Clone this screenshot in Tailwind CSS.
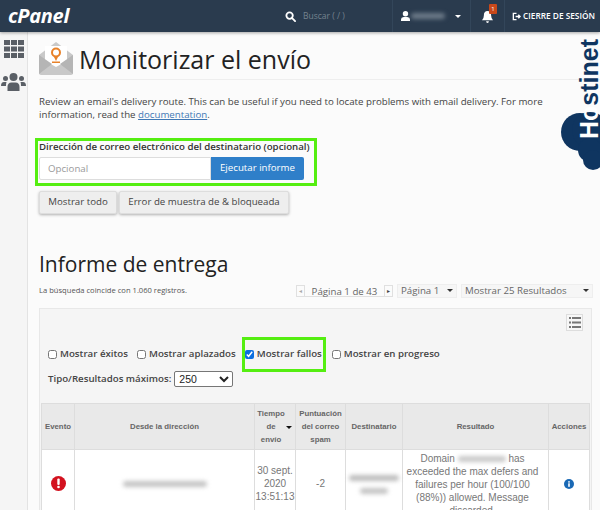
<!DOCTYPE html>
<html lang="es">
<head>
  <meta charset="utf-8"/>
  <title>Monitorizar el envío</title>
  <script src="https://cdn.jsdelivr.net/npm/@tailwindcss/browser@4"></script>
</head>
<body class="w-[600px] h-[510px] overflow-hidden bg-[#fbfbfb] font-['Open_Sans',sans-serif] text-[#333]">
  <!-- Top bar -->
  <header class="h-[32px] bg-[#2a3b4e] flex items-center text-white relative z-10 shadow-[0_1px_3px_rgba(0,0,0,0.35)]">
    <div class="w-[277px] pl-[8px] font-bold italic text-[20px] leading-[28px] tracking-[-0.3px]">cPanel</div>
    <div class="w-[116px] h-full flex items-center border-r border-[#33465a]">
      <svg class="w-[11px] h-[11px] ml-[8px]" viewBox="0 0 12 12" fill="none" stroke="#fff" stroke-width="2"><circle cx="5" cy="5" r="3.500"/><path d="M7.500 7.500 11 11" stroke-linecap="round"/></svg>
      <span class="ml-[7px] text-[8.500px] text-[#75838f]">Buscar ( / )</span>
    </div>
    <div class="w-[78px] h-full flex items-center border-r border-[#33465a]">
      <svg class="w-[9px] h-[10px] ml-[8px]" viewBox="0 0 10 11" fill="#fff"><circle cx="5" cy="3" r="3"/><path d="M0 11V9q0-2 3-2.500h4q3 .5 3 2.500v2z"/></svg>
      <span class="ml-[1px] w-[34px] h-[6px] rounded-full bg-[#6d7b89] blur-[2px]"></span>
      <span class="ml-[10px] w-0 h-0 border-x-[3px] border-x-transparent border-t-[3px] border-t-white"></span>
    </div>
    <div class="w-[34px] h-full flex items-center border-r border-[#33465a] relative">
      <svg class="w-[11px] h-[12px] ml-[11px] mt-[2px]" viewBox="0 0 12 13" fill="#fff"><path d="M6 0q4 0 4 5 0 3 2 5H0q2-2 2-5 0-5 4-5zM4.500 11h3q0 2-1.500 2t-1.500-2z"/></svg>
      <span class="absolute left-[18px] top-[4px] w-[8px] h-[10px] bg-[#c8481a] text-[6px] leading-[10px] text-center rounded-[1px]">1</span>
    </div>
    <div class="flex-1 flex items-center pl-[7px] text-[8.300px] font-semibold whitespace-nowrap">
      <svg class="w-[9px] h-[9px] mr-[2px]" viewBox="0 0 10 10" fill="none" stroke="#fff" stroke-width="1.500"><path d="M5 1.500H1.500v7H5"/><path d="M4 5h5M7 3l2 2-2 2"/></svg>
      CIERRE DE SESIÓN
    </div>
  </header>

  <div class="flex h-[478px]">
    <!-- Sidebar -->
    <aside class="w-[28px] shrink-0 bg-[#f5f5f5] border-r border-[#e3e3e3] flex flex-col items-center pt-[8px] gap-[15px]">
      <svg class="w-[20px] h-[18px]" viewBox="0 0 20 18" fill="#5a5f66">
        <rect x="0" y="0" width="6" height="5"/><rect x="7" y="0" width="6" height="5"/><rect x="14" y="0" width="6" height="5"/>
        <rect x="0" y="6.500" width="6" height="5"/><rect x="7" y="6.500" width="6" height="5"/><rect x="14" y="6.500" width="6" height="5"/>
        <rect x="0" y="13" width="6" height="5"/><rect x="7" y="13" width="6" height="5"/><rect x="14" y="13" width="6" height="5"/>
      </svg>
      <svg class="w-[25px] h-[18px]" viewBox="0 0 25 18" fill="#5a5f66">
        <circle cx="12.500" cy="4" r="4"/><path d="M6.500 18v-4q0-4.500 4-4.500h4q4 0 4 4.500v4z"/>
        <circle cx="4.500" cy="5.500" r="2.500"/><path d="M0 13q0-4 3-4h2.500q-.5 1-.5 4z"/>
        <circle cx="20.500" cy="5.500" r="2.500"/><path d="M25 13q0-4-3-4h-2.500q.5 1 .5 4z"/>
      </svg>
    </aside>

    <main class="flex-1 relative pl-[11px] pr-[7px] overflow-hidden">
      <!-- Title -->
      <div class="flex items-center h-[48px] pt-[6px] border-b border-[#eeeeee] -mr-[7px]">
        <svg class="w-[34px] h-[33px] shrink-0 mr-[6px]" viewBox="0 0 34 33">
          <path d="M0 13 17 0l17 13v18a2 2 0 0 1-2 2H2a2 2 0 0 1-2-2z" fill="#c9c9c9"/>
          <path d="M6 4h22v15l-11 6-11-6z" fill="#fff"/>
          <path d="M0 13l13 9-13 10zM34 13 21 22l13 10z" fill="#b5b5b5"/>
          <circle cx="17" cy="10.500" r="4" fill="none" stroke="#e8822a" stroke-width="2"/>
          <path d="M14.500 14 17 19l2.500-5zM13 19.500h8v1.500h-8z" fill="#e8822a"/>
        </svg>
        <h1 class="text-[25px] leading-[32px] text-[#222] whitespace-nowrap">Monitorizar el envío</h1>
      </div>

      <p class="mt-[15px] text-[9.700px] leading-[13px] text-[#444] w-[510px]">Review an email's delivery route. This can be useful if you need to locate problems with email delivery. For more information, read the <a class="text-[#3f78b5] underline">documentation</a>.</p>

      <!-- Recipient form -->
      <div class="mt-[17px] -ml-[4px] w-[282px] h-[48px] border-[3px] border-[#55ee11] pl-[1px]">
        <label class="block text-[9.700px] leading-[12px] font-semibold text-[#333] whitespace-nowrap">Dirección de correo electrónico del destinatario (opcional)</label>
        <div class="flex mt-[4px] w-[265px] h-[23px]">
          <input class="w-[172px] h-full bg-white border border-[#dddddd] rounded-l-[2px] px-[8px] text-[9.700px] placeholder:text-[#9a9a9a] outline-none" placeholder="Opcional"/>
          <button class="w-[93px] h-full bg-[#2f7fc9] text-white text-[9.700px] rounded-r-[2px]">Ejecutar informe</button>
        </div>
      </div>

      <div class="flex gap-[2px] mt-[5px]">
        <button class="w-[78px] h-[23px] bg-[#eeeeee] border border-[#dddddd] rounded-[2px] shadow-[0_1px_3px_rgba(0,0,0,0.3)] text-[9.700px] text-[#444]">Mostrar todo</button>
        <button class="w-[170px] h-[23px] bg-[#eeeeee] border border-[#dddddd] rounded-[2px] shadow-[0_1px_3px_rgba(0,0,0,0.3)] text-[9.700px] text-[#444]">Error de muestra de &amp; bloqueada</button>
      </div>

      <h2 class="mt-[34px] text-[21px] leading-[32px] text-[#222] whitespace-nowrap">Informe de entrega</h2>

      <!-- Pagination row -->
      <div class="flex items-center justify-between h-[15px] mt-[3px] w-[554px]">
        <span class="text-[7.600px] text-[#555]">La búsqueda coincide con 1.060 registros.</span>
        <div class="flex items-center text-[9.700px] text-[#666]">
          <span class="w-[9px] h-[12px] border border-[#e0e0e0] text-[6px] leading-[10px] text-center text-[#aaa]">◂</span>
          <span class="w-[79px] h-[13px] leading-[15px] text-center border-b border-[#e0e0e0] whitespace-nowrap">Página 1 de 43</span>
          <span class="w-[9px] h-[12px] border border-[#e0e0e0] text-[6px] leading-[10px] text-center text-[#444]">▸</span>
          <span class="ml-[4px] w-[60px] h-[14px] bg-[#f6f6f6] border border-[#eeeeee] pl-[3px] leading-[12px] flex justify-between items-center pr-[3px]">Página 1<i class="w-0 h-0 border-x-[3px] border-x-transparent border-t-[3px] border-t-[#333]"></i></span>
          <span class="ml-[4px] w-[132px] h-[14px] bg-[#f6f6f6] border border-[#eeeeee] pl-[3px] leading-[12px] flex justify-between items-center pr-[3px]">Mostrar 25 Resultados<i class="w-0 h-0 border-x-[3px] border-x-transparent border-t-[3px] border-t-[#333]"></i></span>
        </div>
      </div>

      <!-- Report panel -->
      <section class="mt-[10px] w-[553px] h-[210px] bg-[#f5f5f5] border border-[#e8e8e8] relative pt-[28px]">
        <div class="absolute right-[8px] top-[5px] w-[17px] h-[17px] border border-[#dddddd] bg-[#f7f7f7] flex items-center justify-center">
          <svg class="w-[12px] h-[11px]" viewBox="0 0 12 11" fill="#777"><rect x="0" y="0" width="2" height="2"/><rect x="3" y="0" width="9" height="2"/><rect x="0" y="4.500" width="2" height="2"/><rect x="3" y="4.500" width="9" height="2"/><rect x="0" y="9" width="2" height="2"/><rect x="3" y="9" width="9" height="2"/></svg>
        </div>

        <div class="flex items-center h-[35px] pl-[8px] text-[9.700px] font-semibold text-[#444] whitespace-nowrap">
          <label class="flex items-center gap-[3px]"><input type="checkbox" class="w-[9px] h-[9px] m-0"/>Mostrar éxitos</label>
          <label class="flex items-center gap-[3px] ml-[9px]"><input type="checkbox" class="w-[9px] h-[9px] m-0"/>Mostrar aplazados</label>
          <label class="flex items-center gap-[3px] ml-[6px] h-[35px] w-[84px] border-[3px] border-[#55ee11]"><input type="checkbox" checked class="w-[9px] h-[9px] m-0 accent-[#0b6fe0]"/>Mostrar fallos</label>
          <label class="flex items-center gap-[3px] ml-[6px]"><input type="checkbox" class="w-[9px] h-[9px] m-0"/>Mostrar en progreso</label>
        </div>

        <div class="flex items-center pl-[8px] h-[16px] -mt-[1px] text-[9.700px] font-semibold text-[#444]">
          Tipo/Resultados máximos:
          <select class="ml-[3px] w-[59px] h-[16px] bg-white border border-[#767676] rounded-[2px] text-[10.500px] font-normal text-[#222] font-['Liberation_Sans',sans-serif]"><option>250</option></select>
        </div>

        <table class="mt-[16px] ml-[1px] w-[549px] table-fixed border-collapse font-['Liberation_Sans',sans-serif] text-center">
          <thead>
            <tr class="h-[46px] bg-[#e9e9e9] text-[7.800px] leading-[13px] font-bold text-[#666]">
              <th class="w-[33px] border border-[#dddddd] font-bold">Evento</th>
              <th class="w-[180px] border border-[#dddddd] font-bold">Desde la dirección</th>
              <th class="w-[41px] border border-[#dddddd] font-bold relative pr-[8px]">Tiempo<br/>de<br/>envío<i class="absolute right-[3px] top-[22px] w-0 h-0 border-x-[3px] border-x-transparent border-t-[3px] border-t-[#111]"></i></th>
              <th class="w-[50px] border border-[#dddddd] font-bold">Puntuación<br/>del correo<br/>spam</th>
              <th class="w-[57px] border border-[#dddddd] font-bold">Destinatario</th>
              <th class="w-[146px] border border-[#dddddd] font-bold">Resultado</th>
              <th class="border border-[#dddddd] font-bold">Acciones</th>
            </tr>
          </thead>
          <tbody>
            <tr class="h-[65px] bg-white text-[10px] leading-[13px] text-[#777] align-top">
              <td class="border border-[#dddddd] align-middle">
                <svg class="w-[15px] h-[15px] mx-auto" viewBox="0 0 15 15"><circle cx="7.500" cy="7.500" r="7.500" fill="#d3121f"/><rect x="6.300" y="2.500" width="2.400" height="6.500" rx="1" fill="#fff"/><circle cx="7.500" cy="11" r="1.300" fill="#fff"/></svg>
              </td>
              <td class="border border-[#dddddd] align-middle"><span class="inline-block w-[84px] h-[6px] rounded-full bg-[#c4c4c4] blur-[2px]"></span></td>
              <td class="border border-[#dddddd] align-middle whitespace-nowrap">30 sept.<br/>2020<br/>13:51:13</td>
              <td class="border border-[#dddddd] align-middle">-2</td>
              <td class="border border-[#dddddd] align-middle"><span class="inline-block w-[50px] h-[6px] rounded-full bg-[#bdbdbd] blur-[2px]"></span><br/><span class="inline-block w-[28px] h-[6px] mt-[3px] rounded-full bg-[#c4c4c4] blur-[2px]"></span></td>
              <td class="border border-[#dddddd] pl-[1px] pr-[7px] pt-[2px] whitespace-nowrap">Domain <span class="inline-block w-[48px] h-[6px] rounded-full bg-[#c9c9c9] blur-[2px]"></span> has<br/>exceeded the max defers and<br/>failures per hour (100/100<br/>(88%)) allowed. Message<br/>discarded.</td>
              <td class="border border-[#dddddd] align-middle">
                <svg class="w-[10px] h-[10px] mx-auto" viewBox="0 0 10 10"><circle cx="5" cy="5" r="5" fill="#1a69b5"/><rect x="4.200" y="4.300" width="1.600" height="3.500" fill="#fff"/><rect x="4.200" y="2.200" width="1.600" height="1.400" fill="#fff"/></svg>
              </td>
            </tr>
          </tbody>
        </table>
      </section>

      <!-- Hostinet watermark -->
      <div class="absolute left-[533px] top-[6px] w-[39px] h-[134px] overflow-hidden">
        <svg class="absolute left-0 top-0 w-[39px] h-[134px]" viewBox="0 0 39 134" fill="#0f3560">
          <circle cx="19" cy="94" r="19"/><circle cx="29" cy="92" r="18"/><circle cx="29" cy="112" r="12"/><circle cx="32" cy="122" r="10"/>
        </svg>
        <span class="absolute left-[28px] top-[51px] -translate-x-1/2 -translate-y-1/2 -rotate-90 whitespace-nowrap font-['Liberation_Sans',sans-serif] font-bold text-[25px] leading-[20px] text-[#0f3560]"><span class="text-white">Ho</span>stinet</span>
      </div>
    </main>
  </div>
</body>
</html>
